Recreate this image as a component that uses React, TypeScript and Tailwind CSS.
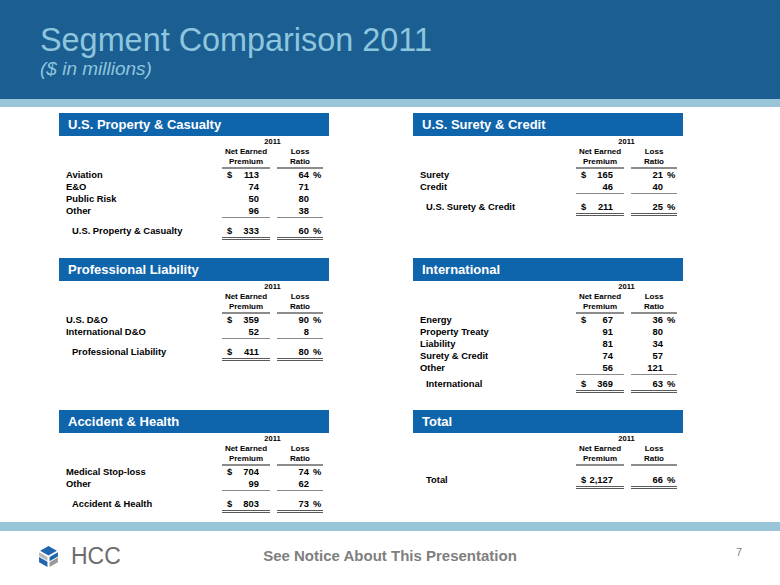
import React from "react";

type Row = { label: string; prem: string; loss: string; dollar?: boolean; pct?: boolean };
type Seg = { title: string; rows: Row[]; total: Row; totalPt: string };

const segs: Seg[] = [
  {
    title: "U.S. Property & Casualty",
    rows: [
      { label: "Aviation", prem: "113", loss: "64", dollar: true, pct: true },
      { label: "E&O", prem: "74", loss: "71" },
      { label: "Public Risk", prem: "50", loss: "80" },
      { label: "Other", prem: "96", loss: "38" },
    ],
    total: { label: "U.S. Property & Casualty", prem: "333", loss: "60", dollar: true, pct: true },
    totalPt: "pt-[7px]",
  },
  {
    title: "U.S. Surety & Credit",
    rows: [
      { label: "Surety", prem: "165", loss: "21", dollar: true, pct: true },
      { label: "Credit", prem: "46", loss: "40" },
    ],
    total: { label: "U.S. Surety & Credit", prem: "211", loss: "25", dollar: true, pct: true },
    totalPt: "pt-[7px]",
  },
  {
    title: "Professional Liability",
    rows: [
      { label: "U.S. D&O", prem: "359", loss: "90", dollar: true, pct: true },
      { label: "International D&O", prem: "52", loss: "8" },
    ],
    total: { label: "Professional Liability", prem: "411", loss: "80", dollar: true, pct: true },
    totalPt: "pt-[7px]",
  },
  {
    title: "International",
    rows: [
      { label: "Energy", prem: "67", loss: "36", dollar: true, pct: true },
      { label: "Property Treaty", prem: "91", loss: "80" },
      { label: "Liability", prem: "81", loss: "34" },
      { label: "Surety & Credit", prem: "74", loss: "57" },
      { label: "Other", prem: "56", loss: "121" },
    ],
    total: { label: "International", prem: "369", loss: "63", dollar: true, pct: true },
    totalPt: "pt-[3px]",
  },
  {
    title: "Accident & Health",
    rows: [
      { label: "Medical Stop-loss", prem: "704", loss: "74", dollar: true, pct: true },
      { label: "Other", prem: "99", loss: "62" },
    ],
    total: { label: "Accident & Health", prem: "803", loss: "73", dollar: true, pct: true },
    totalPt: "pt-[7px]",
  },
  {
    title: "Total",
    rows: [],
    total: { label: "Total", prem: "2,127", loss: "66", dollar: true, pct: true },
    totalPt: "pt-[8px]",
  },
];

function DataRow({ r, total, last }: { r: Row; total?: boolean; last?: boolean }) {
  const cellBorder = total
    ? "border-b-[3px] border-double border-[#5a5a5a]"
    : last
    ? "border-b border-[#8a8a8a]"
    : "";
  return (
    <div className="flex text-[9.4px] leading-[12px] font-bold text-black">
      <div className={"w-[163px] " + (total ? "pl-[13px]" : "pl-[7px]")}>{r.label}</div>
      <div className={"w-[48px] flex justify-between pl-[5px] pr-[11px] " + cellBorder}>
        <span>{r.dollar ? "$" : ""}</span>
        <span>{r.prem}</span>
      </div>
      <div className="w-[7px]" />
      <div className={"w-[46px] flex justify-end " + cellBorder}>
        <span>{r.loss}</span>
        <span className="w-[14px] pl-[4px]">{r.pct ? "%" : ""}</span>
      </div>
    </div>
  );
}

function Panel({ s }: { s: Seg }) {
  return (
    <div className="flex flex-col">
      <div className="h-[23px] bg-[#0f65ac] flex items-center pl-[9px] text-white font-bold text-[13px]">
        {s.title}
      </div>
      <div className="flex flex-col mt-[1px] font-bold text-black">
        <div className="flex">
          <div className="w-[163px]" />
          <div className="w-[101px] text-center text-[7.5px] leading-[10px]">2011</div>
        </div>
        <div className="flex text-[8px] leading-[10px]">
          <div className="w-[163px]" />
          <div className="w-[48px] text-center">Net Earned</div>
          <div className="w-[7px]" />
          <div className="w-[46px] text-center">Loss</div>
        </div>
        <div className="flex text-[8px] leading-[10px]">
          <div className="w-[163px]" />
          <div className="w-[48px] text-center border-b-2 border-[#8c8c8c]">Premium</div>
          <div className="w-[7px]" />
          <div className="w-[46px] text-center border-b-2 border-[#8c8c8c]">Ratio</div>
        </div>
        {s.rows.map((r, i) => (
          <DataRow key={i} r={r} last={i === s.rows.length - 1} />
        ))}
        <div className={s.totalPt}>
          <DataRow r={s.total} total />
        </div>
      </div>
    </div>
  );
}

function Logo() {
  return (
    <svg width="21" height="23" viewBox="0 0 20 22">
      <polygon points="10,1 18,5.5 10,10 2,5.5" fill="#1f66ad" />
      <polygon points="1,7 9,11.5 9,15 1,10.5" fill="#b9b9b9" />
      <polygon points="1,11.5 9,16 9,21 1,16.5" fill="#1f66ad" />
      <polygon points="11,11.5 19,7 19,11 11,15.5" fill="#1f66ad" />
      <polygon points="11,16.5 19,12 19,16.5 11,21" fill="#9a9a9a" />
    </svg>
  );
}

export default function App() {
  return (
    <div className="w-[780px] h-[585px] bg-white overflow-hidden flex flex-col font-['Liberation_Sans',Arial,sans-serif]">
      <div className="h-[99px] bg-[#1b5e92] pt-[22px] pl-[40px] text-[#8ec6de]">
        <div className="text-[32.4px] leading-[36px]">Segment Comparison 2011</div>
        <div className="text-[19px] leading-[20px] italic mt-[1px]">($ in millions)</div>
      </div>
      <div className="h-[8px] bg-[#98c6d8]" />
      <div className="h-[415px] pt-[6px] pl-[59px] grid grid-cols-[270px_270px] gap-x-[84px] grid-rows-[145px_152px_112px]">
        {segs.map((s, i) => (
          <Panel key={i} s={s} />
        ))}
      </div>
      <div className="h-[9px] bg-[#98c6d8]" />
      <div className="h-[54px] grid grid-cols-[1fr_auto_1fr] items-center px-[38px] pb-[4px]">
        <div className="flex items-center gap-[12px]">
          <Logo />
          <span className="text-[23px] leading-none text-[#6d6d6d]">HCC</span>
        </div>
        <div className="text-[15px] font-bold text-[#7f7f7f]">See Notice About This Presentation</div>
        <div className="justify-self-end self-start mt-[16px] text-[11px] text-[#7f7f7f] leading-none">7</div>
      </div>
    </div>
  );
}
